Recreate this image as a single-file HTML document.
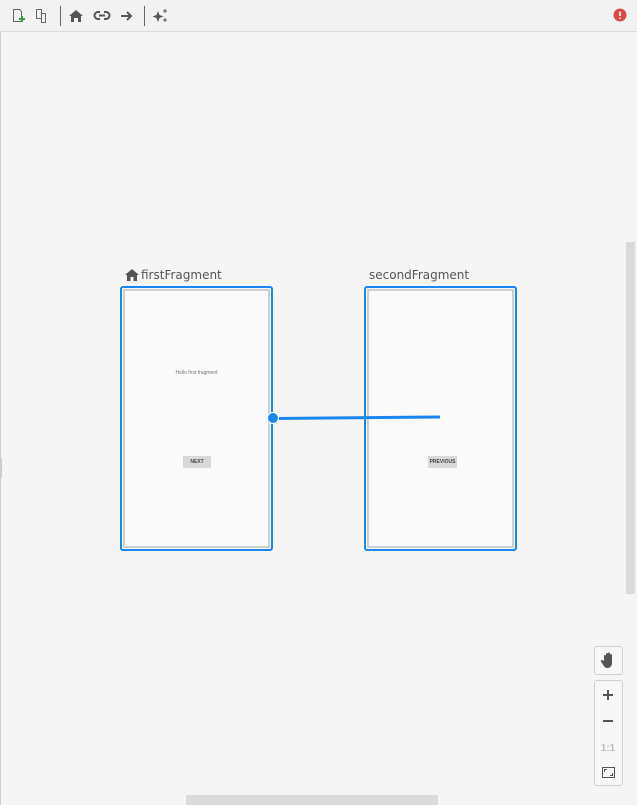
<!DOCTYPE html>
<html><head><style>
body{margin:0;width:637px;height:805px;background:#f5f5f5;position:relative;overflow:hidden;font-family:"Liberation Sans","DejaVu Sans",sans-serif}
.tb{position:absolute;left:0;top:0;width:637px;height:31px;background:#f2f2f2;border-bottom:1px solid #dcdcdc}
.frame{position:absolute;top:286px;width:149px;height:261px;border:2px solid #1a86f0;border-radius:3px}
.inner{position:absolute;left:1px;top:1px;width:143px;height:255px;border:2px solid #cfcfcf;background:#fafafa}
.lbl{position:absolute;top:268px;font-size:12px;color:#555;font-family:"DejaVu Sans",sans-serif}
.btn{position:absolute;background:#d9d9d9;font-size:5px;font-weight:bold;color:#444;text-align:center;line-height:12px;height:12px}
.box{position:absolute;left:594px;width:27px;background:#f7f7f7;border:1px solid #d0d0d0;border-radius:3px}
</style></head><body>
<div style="position:absolute;left:0;top:0;width:1px;height:805px;background:#ccc"></div>
<div class="tb">
<svg width="637" height="31" style="position:absolute;left:0;top:0">
<g fill="none" stroke="#666" stroke-width="1">
<path d="M13.5 9.5h6l2 2v10h-8z"/>
<path d="M36.5 9.5h5v9h-5zM41.5 13.5h4v9h-4z"/>
<path d="M60.5 6v20M144.5 6v20"/>
</g>
<path d="M100 12h-2a3.5 3.5 0 0 0 0 7h2M104 12h2a3.5 3.5 0 0 1 0 7h-2M99 15.5h6" stroke="#555" stroke-width="2" fill="none"/>
<path d="M19 19h6M22 16v6" stroke="#3d9b47" stroke-width="2"/>
<path d="M69 16l7-6 7 6h-2v6h-3v-4h-4v4h-3v-6z" fill="#555"/>
<path d="M121 16h9M127 12l4 4-4 4" stroke="#555" stroke-width="2" fill="none"/>
<path d="M158 11l1.5 4 4 1.5-4 1.5-1.5 4-1.5-4-4-1.5 4-1.5z" fill="#555"/>
<path d="M165 9v4M163 11h4M165 18v4M163 20h4" stroke="#555" stroke-width="1"/>
<circle cx="620" cy="15" r="6.5" fill="#d94b4b"/>
<path d="M620 11.5v4.5M620 17.5v1.5" stroke="#fff" stroke-width="1.6"/>
</svg>
</div>
<div style="position:absolute;left:626px;top:242px;width:9px;height:352px;background:#dadada"></div>
<div style="position:absolute;left:186px;top:795px;width:252px;height:10px;background:#dadada"></div>
<div style="position:absolute;left:0;top:458px;width:2px;height:20px;background:#ccc"></div>

<svg width="14" height="12" style="position:absolute;left:125px;top:269px"><path d="M0 6l7-6 7 6h-2v6h-3.5v-4h-3v4h-3.5v-6z" fill="#555"/></svg>
<div class="lbl" style="left:141px">firstFragment</div>
<div class="lbl" style="left:369px">secondFragment</div>

<div class="frame" style="left:120px"><div class="inner">
<div style="position:absolute;left:0;width:143px;top:79px;text-align:center;font-size:5px;color:#777">Hello first fragment</div>
<div class="btn" style="left:58px;top:165px;width:28px">NEXT</div>
</div></div>
<div class="frame" style="left:364px"><div class="inner">
<div class="btn" style="left:59px;top:165px;width:29px">PREVIOUS</div>
</div></div>

<svg width="637" height="805" style="position:absolute;left:0;top:0;pointer-events:none">
<path d="M273 418.5L440 417" stroke="#1a86f0" stroke-width="3"/>
<circle cx="273" cy="418" r="5.5" fill="#1a86f0" stroke="#fff" stroke-width="1"/>
</svg>

<div class="box" style="top:646px;height:27px">
<svg width="27" height="27"><path d="M9 14v-5a1 1 0 0 1 2 0v4v-6a1 1 0 0 1 2 0v6v-6.5a1 1 0 0 1 2 0v6.5v-5a1 1 0 0 1 2 0v8c0 3-2 5-4.5 5c-2 0-3-1-4-2.5l-2.5-4a1 1 0 0 1 2-1z" fill="#555"/></svg>
</div>
<div class="box" style="top:680px;height:104px">
<svg width="27" height="104">
<path d="M8 14h10M13 9v10M8 40h10" stroke="#555" stroke-width="2"/>
<text x="13" y="70" font-size="10" fill="#bbb" text-anchor="middle" font-weight="bold" font-family="Liberation Sans">1:1</text>
<rect x="7.5" y="86.5" width="12" height="10" fill="none" stroke="#555"/>
<path d="M9.5 91v-2.5h2.5M17.5 92v2.5h-2.5" stroke="#555" fill="none"/>
</svg>
</div>
</body></html>
